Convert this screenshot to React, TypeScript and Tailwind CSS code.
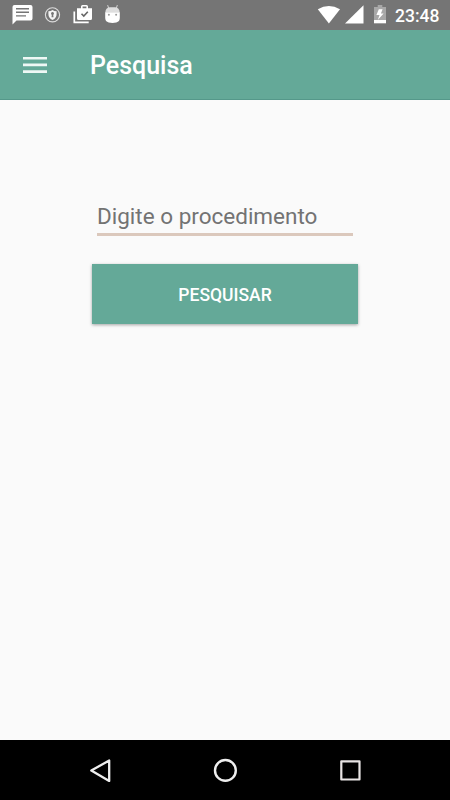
function StatusBar() {
  return (
    <div className="flex h-[30px] items-start bg-[#757575] text-white">
      <svg className="ml-3 h-[30px] w-[22px]" viewBox="12 0 22 30">
        <path fill="#fff" d="M14.500 5h16a2 2 0 0 1 2 2v11.500a2 2 0 0 1-2 2h-14l-4 4V7a2 2 0 0 1 2-2z" />
        <path stroke="#757575" strokeWidth="1.400" d="M16 8.700h13M16 12.300h13M16 15.900h10" />
      </svg>
      <svg className="ml-[10px] h-[30px] w-[18px]" viewBox="44 0 18 30">
        <circle cx="52.500" cy="14.800" r="7.100" fill="none" stroke="#ddd" strokeWidth="1.100" />
        <path fill="#f5f5f5" d="M48.400 11.300q2.500 0 4.100-1.200 1.600 1.200 4.100 1.200v2.700q0 4-4.100 6-4.100-2-4.100-6z" />
        <path fill="#757575" d="M52.500 12a1.500 1.500 0 0 1 .7 2.800l.3 2.400h-2l.3-2.400a1.500 1.500 0 0 1 .7-2.800z" />
      </svg>
      <svg className="ml-[10px] h-[30px] w-[22px]" viewBox="72 0 22 30">
        <path fill="none" stroke="#fff" strokeWidth="1.700" d="M74.300 11.500v10.800h14.400" />
        <path fill="#fff" fillRule="evenodd" d="M77 8.300h4V6.500Q81 5 82.500 5h4Q88 5 88 6.500v1.800h4v10.200q0 1.500-1.500 1.500h-12q-1.500 0-1.500-1.500zM82.600 6.600v1.700h3.800V6.600z" />
        <path fill="none" stroke="#666" strokeWidth="1.600" d="m81.500 13.700 2.300 2.400 4-4.300" />
      </svg>
      <svg className="ml-[10px] h-[30px] w-[18px]" viewBox="104 0 18 30">
        <path stroke="#d6d6d6" strokeWidth="1" strokeLinecap="round" d="m107.800 5.500.9 3M117.200 5.500l-.9 3" />
        <path fill="#dedede" d="M105.300 12.500q.3-5 4.400-5.300h5.600q4.100.3 4.400 5.300z" />
        <path fill="#fff" d="M105.200 12.300h14.600V18q0 3.500-3.500 4.500-3.800.8-7.600 0-3.500-1-3.500-4.500z" />
        <circle cx="108.900" cy="14.800" r="1" fill="#999" />
        <circle cx="116.100" cy="14.800" r="1" fill="#999" />
      </svg>
      <svg className="ml-auto h-[30px] w-[24px]" viewBox="317 0 24 30">
        <path fill="#fff" d="M317.800 9.300q11-6.500 22.200 0L328.900 23.400z" />
      </svg>
      <svg className="ml-[3px] h-[30px] w-[20px]" viewBox="344 0 20 30">
        <path fill="#fff" d="M363.500 5.200v18.300H345z" />
      </svg>
      <svg className="ml-[9px] h-[30px] w-[14px]" viewBox="373 0 14 30">
        <path fill="#a8a8a8" d="M377.700 5h4.600v2h3.700v16.300h-12V7h3.700z" />
        <path fill="#fff" d="M374 20h12v3.300h-12zM382.600 9.300h-3.800l-2.400 5.800h3.100l-1.700 4.800 5.800-6.300h-2.700z" />
      </svg>
      <span className="ml-[7px] mr-[9px] w-[47px] whitespace-nowrap pl-[1px] pt-[1px] text-[17.5px] font-medium leading-[30px]">23:48</span>
    </div>
  );
}

function AppBar() {
  return (
    <header className="flex h-[70px] items-center border-b border-[#55988a] bg-[#64a998] text-white">
      <svg className="ml-[23px] h-6 w-6" viewBox="0 0 24 24">
        <path stroke="#eff8f5" strokeWidth="2.600" d="M0 5.200h24M0 11.900h24M0 18.600h24" />
      </svg>
      <h1 className="ml-[43px] pt-[3px] text-[25px] font-medium leading-[30px]">Pesquisa</h1>
    </header>
  );
}

function NavigationBar() {
  return (
    <nav className="flex h-[60px] items-center justify-between bg-black px-[88px]">
      <svg className="h-6 w-6" viewBox="0 0 24 24" fill="none" stroke="#eee" strokeWidth="2.300" strokeLinejoin="round">
        <path d="M21.200 2.500v20.500L3.300 12.600z" />
      </svg>
      <svg className="h-6 w-6" viewBox="0 0 24 24" fill="none" stroke="#eee" strokeWidth="2.400">
        <circle cx="12.400" cy="12.400" r="10.400" />
      </svg>
      <svg className="h-6 w-6" viewBox="0 0 24 24" fill="none" stroke="#e8e4e4" strokeWidth="2.200" strokeLinejoin="round">
        <path d="M3.300 3.300h18.200v18.200H3.300z" />
      </svg>
    </nav>
  );
}

export default function App() {
  return (
    <div className="flex h-[800px] w-[450px] flex-col overflow-hidden bg-[#fafafa] font-['Roboto',sans-serif]">
      <StatusBar />
      <AppBar />
      <main className="flex flex-1 flex-col items-center pt-[100px]">
        <input
          aria-label="Digite o procedimento"
          placeholder="Digite o procedimento"
          className="h-9 w-[256px] border-b-[3px] border-[#dbc8bc] bg-transparent p-0 pb-[1px] text-[22.5px] text-[#737373] outline-none placeholder:text-[#737373]"
        />
        <button className="mt-7 h-[60px] w-[266px] bg-[#64a998] pt-[2px] text-[17.5px] font-medium text-white shadow-[0_1px_3px_rgba(0,0,0,0.35)]">
          PESQUISAR
        </button>
      </main>
      <NavigationBar />
    </div>
  );
}
